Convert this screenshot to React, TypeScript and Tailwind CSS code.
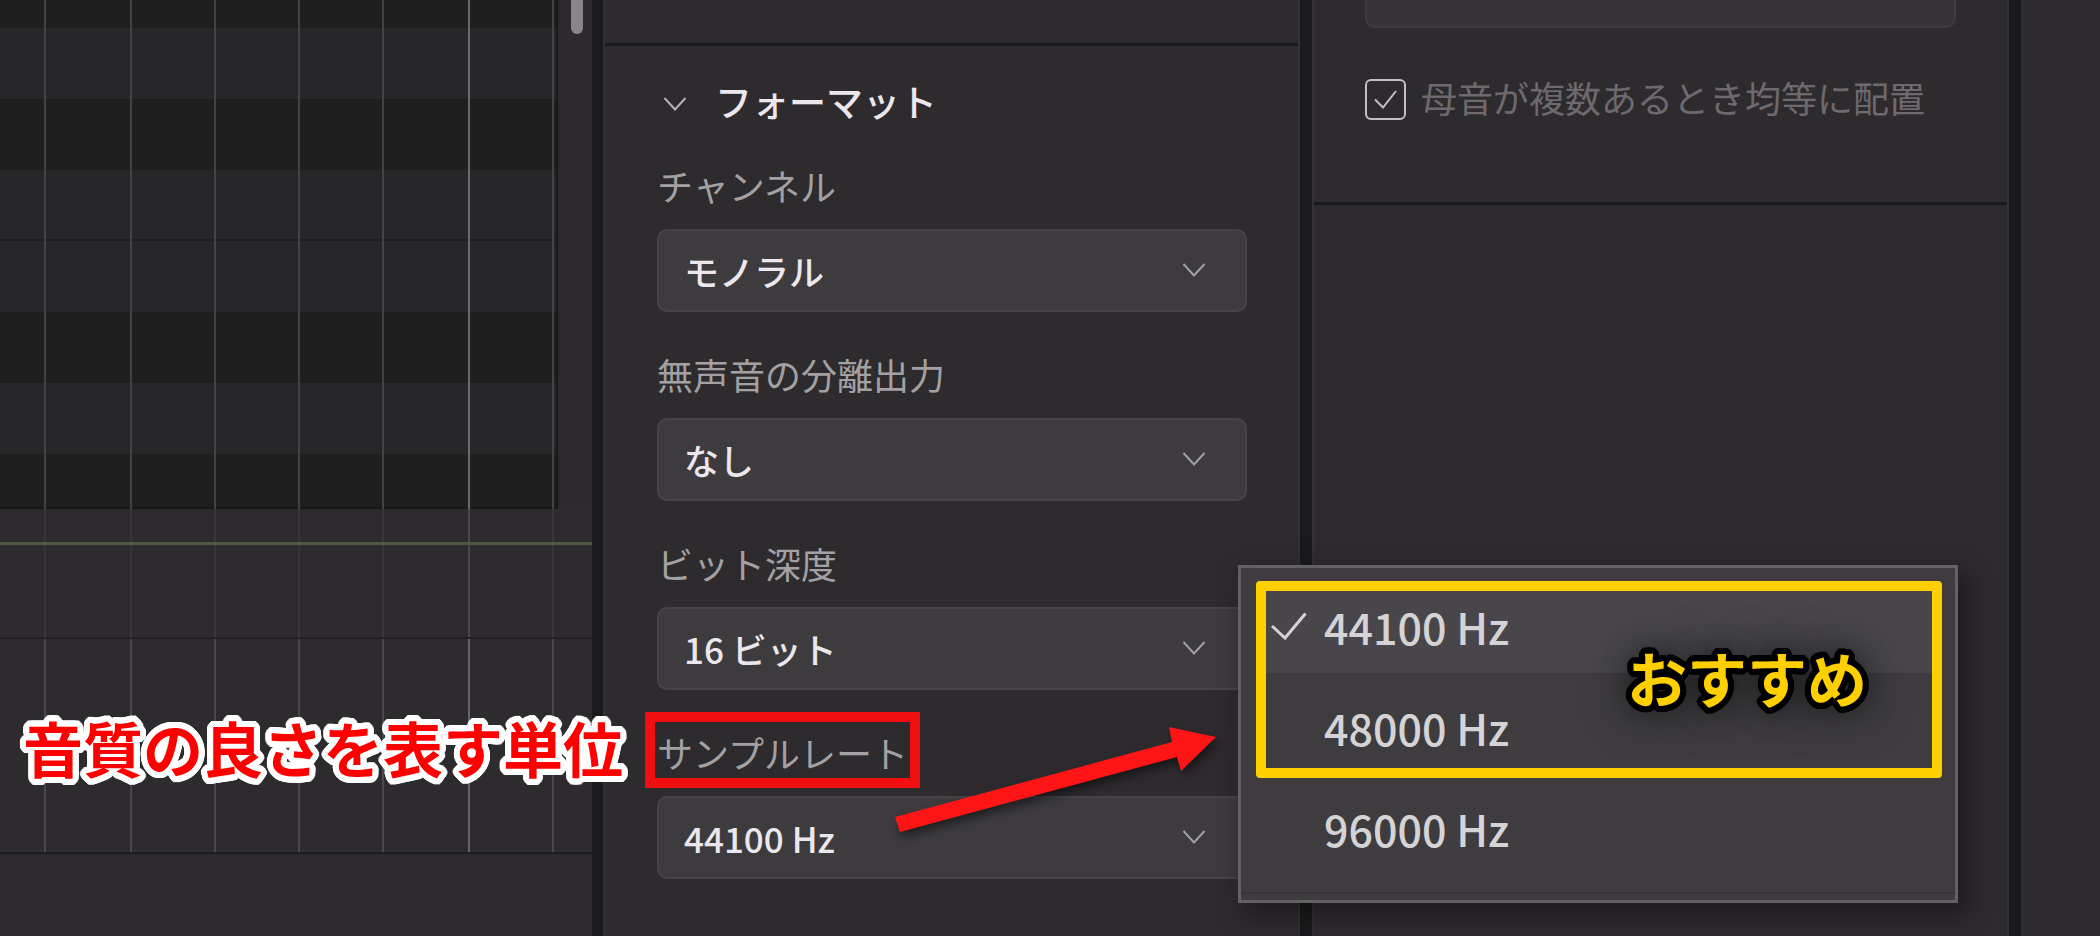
import { useState } from 'react';

const ROWS = [
  { tone: 'bg-[#1f1f1f]', height: 'h-7' },
  { tone: 'bg-[#272729]', height: 'h-[71px]' },
  { tone: 'bg-[#1f1f1f]', height: 'h-[71px]' },
  { tone: 'bg-[#272729] border-b-2 border-[#1d1d1f]', height: 'h-[71px]' },
  { tone: 'bg-[#272729]', height: 'h-[71px]' },
  { tone: 'bg-[#1f1f1f]', height: 'h-[71px]' },
  { tone: 'bg-[#272729]', height: 'h-[71px]' },
  { tone: 'bg-[#1f1f1f]', height: 'h-[53px]' },
];

const FIELDS = [
  { id: 'channel', label: 'チャンネル', options: ['モノラル', 'ステレオ'] },
  { id: 'unvoiced', label: '無声音の分離出力', options: ['なし', 'あり'] },
  { id: 'depth', label: 'ビット深度', options: ['16 ビット', '24 ビット'] },
];

const RATES = ['44100 Hz', '48000 Hz', '96000 Hz'];

// ring of hard shadows, gives the lettering a rounded outline
function outline(color: string, radius: number) {
  const shadows: string[] = [];
  for (const r of [radius, radius / 2]) {
    for (let i = 0; i < 32; i++) {
      const a = (i / 32) * Math.PI * 2;
      shadows.push(`${(Math.cos(a) * r).toFixed(2)}px ${(Math.sin(a) * r).toFixed(2)}px 0 ${color}`);
    }
  }
  return shadows.join(', ');
}

function BeatLines({ line, bar }: { line: string; bar: string }) {
  return (
    <div className="pointer-events-none absolute inset-y-0 left-0 grid w-full grid-cols-[46fr_86fr_84fr_84fr_84fr_86fr_84fr_38fr]">
      {[0, 1, 2, 3, 4, 5, 6].map((i) => (
        <div key={i} className={`border-r-2 ${i === 5 ? bar : line}`} />
      ))}
    </div>
  );
}

function Chevron({ className }: { className: string }) {
  return (
    <svg viewBox="0 0 24 16" fill="none" stroke="currentColor" strokeWidth="2" className={`h-4 w-6 ${className}`}>
      <path d="M1.5 2 L12 13.5 L22.5 2" />
    </svg>
  );
}

function SelectBox({ id, options, value, onChange }: { id: string; options: string[]; value?: string; onChange?: (v: string) => void }) {
  return (
    <div className="relative mt-[18px]">
      <select
        id={id}
        value={value}
        onChange={onChange ? (e) => onChange(e.target.value) : undefined}
        className="h-[83px] w-full appearance-none rounded-[10px] border-2 border-[#464447] bg-[#3d3b3e] pt-0.5 pl-[25px] text-[35px] font-medium text-[#ece6ed] outline-none"
      >
        {options.map((o) => (
          <option key={o}>{o}</option>
        ))}
      </select>
      <Chevron className="pointer-events-none absolute top-[33px] right-[41px] text-[#a19fa2]" />
    </div>
  );
}

function PianoRoll() {
  return (
    <div className="flex flex-col bg-[#2c2a2d]">
      <div className="relative">
        <div className="flex">
          <div className="flex-1 border-r-2 border-b-2 border-[#19191b]">
            {ROWS.map((row, i) => (
              <div key={i} className={`${row.tone} ${row.height}`} />
            ))}
          </div>
          <div className="flex w-[34px] justify-center pl-1">
            <div className="h-[34px] w-3 rounded-b-full bg-[#89858b]" />
          </div>
        </div>
        <BeatLines line="border-[#434346]" bar="border-[#69686b]" />
      </div>
      <div className="relative h-[130px] border-b-2 border-[#232124] bg-[#2e2b2f] pt-[33px]">
        <BeatLines line="border-[#373538]" bar="border-[#4b494c]" />
        <div className="relative h-[3px] bg-[#4f593b]" />
      </div>
      <div className="relative h-[215px] border-b-2 border-[#1c1b1d] bg-[#2e2b2f]">
        <BeatLines line="border-[#49474b]" bar="border-[#67656a]" />
      </div>
      <div className="flex-1 bg-[#2e2b2f]" />
    </div>
  );
}

function RateMenu({ rate, onPick }: { rate: string; onPick: (r: string) => void }) {
  return (
    <div
      role="listbox"
      aria-label="サンプルレート"
      className="absolute -top-[161px] left-[581px] z-20 flex h-[338px] w-[720px] flex-col gap-[9px] border-3 border-[#636164] bg-[#3e3c3f] px-4 pt-[13px] shadow-[8px_10px_24px_4px_rgba(0,0,0,0.35)]"
    >
      {RATES.map((r) => (
        <button
          key={r}
          role="option"
          aria-selected={r === rate}
          onClick={() => onPick(r)}
          className={`flex h-[92px] shrink-0 items-center pb-0.5 pl-3.5 text-[43px] font-medium text-[#d5d3d6] ${r === rate ? 'bg-[#48464b]' : ''}`}
        >
          <svg viewBox="0 0 36 28" fill="none" stroke="currentColor" strokeWidth="3" className={`mr-[17px] h-7 w-9 ${r === rate ? '' : 'invisible'}`}>
            <path d="M1 14 L14 26 L34.500 1.500" />
          </svg>
          {r}
        </button>
      ))}
      <div className="pointer-events-none absolute inset-x-0 bottom-0 h-2 border-t-2 border-[#363437]" />
      <div className="pointer-events-none absolute top-[13px] right-[13px] left-[15px] h-[197px] rounded-[4px] border-10 border-[#ffcf00]" />
      <span
        className="pointer-events-none absolute top-[69px] right-[88px] text-[60px] leading-[80px] font-bold text-[#ffcf00]"
        style={{ textShadow: `${outline('#000', 6)}, 0 0 50px rgba(0,0,0,0.9), 0 0 30px rgba(0,0,0,0.6)` }}
      >
        おすすめ
      </span>
    </div>
  );
}

function FormatPanel() {
  const [rate, setRate] = useState(RATES[0]);

  return (
    <section className="border-x-2 border-[#343135] bg-[#2e2b2e]">
      <div className="h-[46px] border-b-3 border-[#19181a]" />
      <div className="pt-[29px] pr-[51px] pl-[52px]">
        <button className="flex items-center text-[37px] leading-[52px] font-medium text-[#ece6ed]">
          <Chevron className="mt-1.5 mr-7 ml-1.5 text-[#b5b2b6]" />
          フォーマット
        </button>
        <div className="mt-8 flex flex-col gap-9">
          {FIELDS.map((f) => (
            <div key={f.id}>
              <label htmlFor={f.id} className="block leading-[52px] text-[#a3a1a3]">{f.label}</label>
              <SelectBox id={f.id} options={f.options} />
            </div>
          ))}
          <div className="relative">
            <label htmlFor="rate" className="relative block w-max leading-[52px] text-[#a3a1a3]">
              サンプルレート
              <span className="absolute -inset-x-3 -top-3.5 -bottom-2.5 border-10 border-[#ef0f10]" />
            </label>
            <SelectBox id="rate" options={RATES} value={rate} onChange={setRate} />
            <strong
              className="pointer-events-none absolute -top-[19px] right-full z-10 mr-[34px] text-[60px] leading-[80px] font-bold whitespace-nowrap text-[#ff0000]"
              style={{ textShadow: outline('#fff', 6) }}
            >
              音質の良さを表す単位
            </strong>
            <svg
              viewBox="0 0 330 120"
              className="pointer-events-none absolute top-0 left-[233px] z-10 h-[120px] w-[330px] overflow-visible drop-shadow-[3px_5px_5px_rgba(0,0,0,0.5)]"
            >
              <path d="M5 91 L282 16 L279 1 L326 11 L291 45 L287 31 L10 106 Z" fill="#ff1515" />
            </svg>
            <RateMenu rate={rate} onPick={setRate} />
          </div>
        </div>
      </div>
    </section>
  );
}

function LyricsPanel() {
  return (
    <section className="border-x-2 border-[#343135] bg-[#2e2b2e]">
      <div className="h-[205px] border-b-3 border-[#19181a] px-[51px]">
        <input
          aria-label="歌詞"
          className="block h-7 w-full rounded-b-[10px] border-2 border-t-0 border-[#3e3c3f] bg-[#353336] outline-none"
        />
        <div className="mt-[51px] flex items-start">
          <span className="relative size-[41px]">
            <input
              id="vowels"
              type="checkbox"
              defaultChecked
              className="peer block size-full appearance-none rounded-md border-2 border-[#c3bfc7]"
            />
            <svg
              viewBox="0 0 41 41"
              fill="none"
              stroke="#c3bfc7"
              strokeWidth="2"
              className="pointer-events-none absolute inset-0 hidden peer-checked:block"
            >
              <path d="M10 20.500 L18 28.500 L31 12" />
            </svg>
          </span>
          <label htmlFor="vowels" className="ml-[15px] leading-9 whitespace-nowrap text-[#6e696f]">
            母音が複数あるとき均等に配置
          </label>
        </div>
      </div>
    </section>
  );
}

export default function App() {
  return (
    <main className="grid min-h-screen grid-cols-[592fr_11px_697fr_12px_697fr_12px_79fr] overflow-hidden bg-[#1a1a1c] font-['Noto_Sans_CJK_JP',sans-serif] text-[36px]">
      <PianoRoll />
      <div />
      <FormatPanel />
      <div />
      <LyricsPanel />
      <div />
      <div className="border-l-2 border-[#343135] bg-[#2e2b2e]" />
    </main>
  );
}
